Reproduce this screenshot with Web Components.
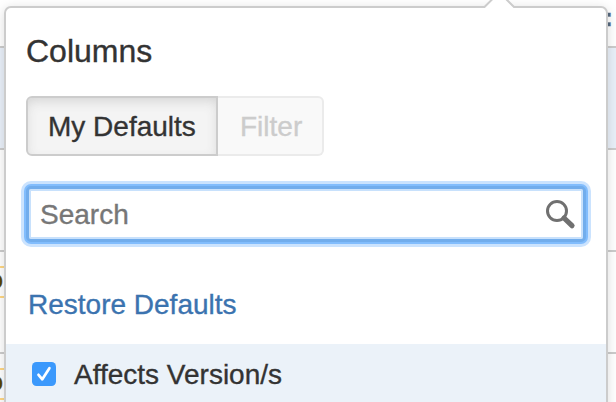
<!DOCTYPE html>
<html lang="en">
<head>
<meta charset="utf-8">
<title>Columns</title>
<style>
  body {
    margin: 0;
    width: 616px;
    height: 402px;
    overflow: hidden;
    background: #fff;
    color: #333;
    font-family: "Liberation Sans", Arial, sans-serif;
    -webkit-text-stroke: 0.35px currentColor;
  }
</style>
</head>
<body>
<issue-page>
  <issue-row class="head"><b slot="end">:</b></issue-row>
  <issue-row class="selected"></issue-row>
  <issue-row></issue-row>
  <issue-row><span>o</span></issue-row>
  <issue-row><span>o</span></issue-row>
  <column-dialog slot="dialog" heading="Columns">
    <toggle-group>
      <toggle-button active>My Defaults</toggle-button>
      <toggle-button disabled>Filter</toggle-button>
    </toggle-group>
    <search-field placeholder="Search"></search-field>
    <restore-link>Restore Defaults</restore-link>
    <column-option>Affects Version/s</column-option>
  </column-dialog>
</issue-page>

<script>
  function attach(el, html) {
    const template = document.createElement("template");
    template.innerHTML = html;
    el.attachShadow({ mode: "open" });
    el.shadowRoot.appendChild(template.content.cloneNode(true));
  }

  class IssuePage extends HTMLElement {
    constructor() {
      super();
      attach(this, `
        <style>
          :host {
            display: block;
            position: relative;
            width: 616px;
            height: 402px;
            overflow: hidden;
          }
          .rows {
            display: flex;
            flex-direction: column;
          }
        </style>
        <div class="rows"><slot></slot></div>
        <slot name="dialog"></slot>
      `);
    }
  }

  class IssueRow extends HTMLElement {
    constructor() {
      super();
      attach(this, `
        <style>
          :host {
            display: flex;
            flex: none;
            justify-content: space-between;
            box-sizing: border-box;
            height: 102px;
            padding-top: 14px;
            border-bottom: 2px solid #ccc;
            overflow: hidden;
          }
          :host(.head) {
            height: 48px;
            padding-top: 0;
          }
          :host(.selected) {
            background: #e9f0f9;
          }
          ::slotted(span) {
            box-sizing: border-box;
            height: 32px;
            width: 20px;
            margin-left: -14px;
            border: solid #ffd783;
            border-width: 2px 0;
            font-size: 28px;
            font-weight: bold;
            line-height: 24px;
            color: #594300;
          }
          ::slotted(b) {
            margin: 0 3px 0 auto;
            font-size: 26px;
            line-height: 34px;
            color: #56687c;
          }
        </style>
        <slot></slot>
        <slot name="end"></slot>
      `);
    }
  }

  class ColumnDialog extends HTMLElement {
    constructor() {
      super();
      attach(this, `
        <style>
          :host {
            display: flex;
            flex-direction: column;
            box-sizing: border-box;
            position: absolute;
            left: 4px;
            top: 6px;
            width: 604px;
            height: 420px;
            border: 2px solid #ccc;
            border-radius: 7px;
            background: #fff;
            box-shadow: 0 2px 12px rgba(0, 0, 0, 0.14);
          }
          .arrow {
            position: absolute;
            left: 476px;
            top: -10px;
          }
          h2 {
            margin: 25px 20px 26px;
            font-size: 32px;
            font-weight: normal;
            line-height: 37px;
          }
        </style>
        <svg class="arrow" width="36" height="12" viewBox="0 0 36 12">
          <path d="M2 12 V9.5 L12.5 -1 H22 L32.5 9.5 V12 Z" fill="#fff"/>
          <path d="M1 9 H2.5 L12.5 -1 M22 -1 L32 9 H34" fill="none" stroke="#ccc" stroke-width="2"/>
        </svg>
        <h2></h2>
        <slot></slot>
      `);
      this.shadowRoot.querySelector("h2").textContent = this.getAttribute("heading");
    }
  }

  class ToggleGroup extends HTMLElement {
    constructor() {
      super();
      attach(this, `
        <style>
          :host {
            display: flex;
            height: 60px;
            margin: 0 20px 30px;
          }
        </style>
        <slot></slot>
      `);
    }
  }

  class ToggleButton extends HTMLElement {
    constructor() {
      super();
      attach(this, `
        <style>
          :host {
            display: block;
            box-sizing: border-box;
            width: 106px;
            padding: 13px 0 0 20px;
            border: 2px solid #ccc;
            font-size: 28px;
            line-height: 32px;
            white-space: nowrap;
          }
          :host([active]) {
            width: 192px;
            border-radius: 6px 0 0 6px;
            background: #f4f4f4;
            box-shadow: inset 0 5px 12px -2px #d4d4d4;
          }
          :host([disabled]) {
            padding-left: 22px;
            border-color: #ebebeb;
            border-left: 0;
            border-radius: 0 6px 6px 0;
            background: #f9f9f9;
            color: #ccc;
          }
        </style>
        <slot></slot>
      `);
    }
  }

  class SearchField extends HTMLElement {
    constructor() {
      super();
      attach(this, `
        <style>
          :host {
            display: flex;
            align-items: center;
            justify-content: space-between;
            box-sizing: border-box;
            height: 56px;
            margin: 0 20px 46px;
            padding: 0 7px 0 11px;
            border: 3px solid #72adec;
            border-radius: 5px;
            background: #fff;
            box-shadow: inset 0 0 0 2px #c8e1fc, 0 0 0 2px #82bdfd, 0 0 0 5px #cbe3fe;
            color: #777;
            font-size: 28px;
            line-height: 32px;
          }
          span {
            padding-top: 2px;
          }
        </style>
        <span></span>
        <svg width="32" height="32" viewBox="0 0 32 32" fill="none" stroke="#707070">
          <circle cx="13" cy="13" r="9.5" stroke-width="3"/>
          <path d="M20 20 L28 27.7" stroke-width="5.2" stroke-linecap="round"/>
        </svg>
      `);
      this.shadowRoot.querySelector("span").textContent = this.getAttribute("placeholder");
    }
  }

  class RestoreLink extends HTMLElement {
    constructor() {
      super();
      attach(this, `
        <style>
          :host {
            display: block;
            margin: 1px 22px 23px;
            color: #3b73af;
            font-size: 28px;
            line-height: 32px;
          }
        </style>
        <slot></slot>
      `);
    }
  }

  class ColumnOption extends HTMLElement {
    constructor() {
      super();
      attach(this, `
        <style>
          :host {
            display: flex;
            align-items: center;
            gap: 18px;
            height: 60px;
            padding-left: 26px;
            background: #ebf2f9;
            font-size: 28px;
            line-height: 32px;
          }
          svg {
            flex: none;
          }
          span {
            padding-top: 2px;
          }
        </style>
        <svg width="24" height="24" viewBox="0 0 24 24">
          <rect width="24" height="24" rx="4.5" fill="#3b99fc"/>
          <path d="M6.5 12.8 L10.3 17.3 L17.4 6.2" fill="none" stroke="#fff" stroke-width="2.7" stroke-linecap="round" stroke-linejoin="round"/>
        </svg>
        <span><slot></slot></span>
      `);
    }
  }

  window.customElements.define("issue-page", IssuePage);
  window.customElements.define("issue-row", IssueRow);
  window.customElements.define("column-dialog", ColumnDialog);
  window.customElements.define("toggle-group", ToggleGroup);
  window.customElements.define("toggle-button", ToggleButton);
  window.customElements.define("search-field", SearchField);
  window.customElements.define("restore-link", RestoreLink);
  window.customElements.define("column-option", ColumnOption);
</script>
</body>
</html>
